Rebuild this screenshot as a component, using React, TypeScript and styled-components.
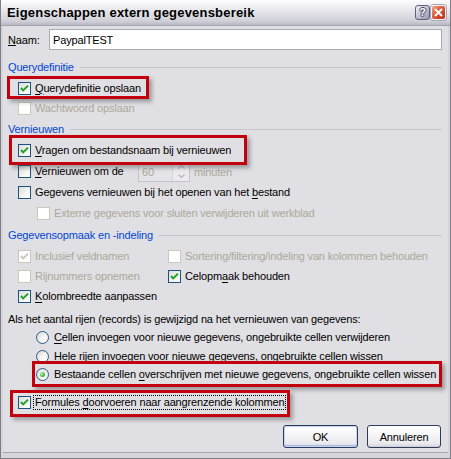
import React from 'react';
import styled, { createGlobalStyle } from 'styled-components';

const Global = createGlobalStyle`
  html, body { margin: 0; padding: 0; background: #e0dfe3; }
  body { font-family: "Liberation Sans", Arial, sans-serif; font-size: 11px; letter-spacing: -0.16px; color: #000; }
  * { box-sizing: border-box; }
`;

const Window = styled.div`
  width: 451px;
  height: 459px;
  display: flex;
  flex-direction: column;
  background: #e0dfe3;
  border: 1px solid #7f7e87;
  border-top: none;
`;

const TitleBar = styled.div`
  height: 26px;
  flex: none;
  display: flex;
  align-items: center;
  padding: 0 4px 0 6px;
  background: linear-gradient(#fdfdfe 0%, #f1f1f4 22%, #e0e0e6 55%, #cfcfd7 85%, #b8b8c3 100%);
  border-bottom: 1px solid #a4a3ae;
`;

const Title = styled.div`
  font-family: "Liberation Sans", Arial, sans-serif;
  font-weight: bold;
  font-size: 13px;
  letter-spacing: 0.2px;
  color: #000;
`;

const TitleButtons = styled.div`
  margin-left: auto;
  display: flex;
  gap: 1px;
`;

const HelpButton = styled.div`
  width: 15px;
  height: 15px;
  border: 1px solid #5f6079;
  border-radius: 3px;
  background: linear-gradient(135deg, #f6f6fa 0%, #c4c5d8 45%, #9597b3 100%);
  color: #fff;
  font-weight: bold;
  font-size: 11px;
  line-height: 13px;
  text-align: center;
  letter-spacing: 0;
  text-shadow: 1px 0 #4a4b63, -1px 0 #4a4b63, 0 1px #4a4b63, 0 -1px #4a4b63;
`;

const CloseButton = styled.div`
  width: 15px;
  height: 15px;
  border: 1px solid #f2f2f4;
  border-radius: 3px;
  background: linear-gradient(135deg, #f0a58c 0%, #dc5b3b 45%, #b8301a 100%);
  display: flex;
  align-items: center;
  justify-content: center;
  box-shadow: 0 0 0 1px #a9a9b5;
`;

const Client = styled.div`
  flex: 1;
  display: flex;
  flex-direction: column;
  padding: 0 6px 0 5px;
  border-left: 2px solid #d6d5dc;
  border-right: 2px solid #d6d5dc;
  border-bottom: 5px solid #d6d5dc;
  box-shadow: inset 0 -1px #a8a7ae;
`;

const NameRow = styled.div`
  display: flex;
  align-items: center;
  height: 21px;
  margin-top: 3px;
  flex: none;
`;

const NameLabel = styled.label`
  width: 41px;
`;

const TextInput = styled.input`
  flex: 1;
  height: 21px;
  border: 1px solid #a5acb2;
  background: #fff;
  padding: 0 3px;
  font: inherit;
  letter-spacing: inherit;
  color: #000;
  outline: none;
`;

const GroupHeader = styled.div<{ $mt: number }>`
  display: flex;
  align-items: center;
  gap: 6px;
  height: 14px;
  flex: none;
  margin-top: ${p => p.$mt}px;
  color: #0046d5;
  white-space: nowrap;
  &::after {
    content: '';
    flex: 1;
    height: 1px;
    background: #c7c3cb;
  }
`;

const Row = styled.div<{ $h: number; $indent: number; $mt?: number }>`
  display: flex;
  align-items: center;
  height: ${p => p.$h}px;
  flex: none;
  padding-left: ${p => p.$indent}px;
  margin-top: ${p => p.$mt ?? 0}px;
  white-space: nowrap;
`;

const OptionGrid = styled.div`
  display: grid;
  grid-template-columns: 150px 1fr;
  grid-auto-rows: 20px;
  align-items: center;
  padding-left: 10px;
  margin-top: 4px;
  flex: none;
  white-space: nowrap;
`;

const Option = styled.span<{ $width?: number }>`
  display: inline-flex;
  align-items: center;
  width: ${p => (p.$width ? `${p.$width}px` : 'auto')};
`;

const Box = styled.span<{ $disabled?: boolean }>`
  width: 13px;
  height: 13px;
  flex: none;
  display: inline-flex;
  align-items: center;
  justify-content: center;
  border: 1px solid ${p => (p.$disabled ? '#cac8bb' : '#1c5180')};
  background: ${p => (p.$disabled ? '#fff' : 'linear-gradient(135deg, #dcdcd7 0%, #f4f4f2 60%, #fff 100%)')};
`;

const Circle = styled.span<{ $checked?: boolean }>`
  width: 13px;
  height: 13px;
  flex: none;
  border-radius: 50%;
  border: 1px solid #2b5b8a;
  background: radial-gradient(circle at 70% 70%, #fff 0%, #f2f2f0 40%, #d6d6d2 100%);
  display: inline-flex;
  align-items: center;
  justify-content: center;
  &::after {
    content: '';
    display: ${p => (p.$checked ? 'block' : 'none')};
    width: 5px;
    height: 5px;
    border-radius: 50%;
    background: radial-gradient(circle at 35% 35%, #c3f2c3 0%, #4ac44a 50%, #1b8f1b 100%);
  }
`;

const Label = styled.span<{ $disabled?: boolean; $gap?: number; $focus?: boolean }>`
  margin-left: ${p => p.$gap ?? 4}px;
  color: ${p => (p.$disabled ? '#aca899' : '#000')};
  outline: ${p => (p.$focus ? '1px dotted #000' : 'none')};
  outline-offset: 0;
  padding: ${p => (p.$focus ? '0 1px' : '0')};
  line-height: 13px;
  u { text-decoration-thickness: 1px; text-underline-offset: 2px; }
`;

/* Annotation frame drawn over a row: $w fixes the right edge of the frame. */
const Highlight = styled.span<{ $t: number; $b: number; $l: number; $w: number }>`
  position: relative;
  display: inline-flex;
  align-items: center;
  align-self: stretch;
  width: ${p => p.$w}px;
  &::after {
    content: '';
    position: absolute;
    top: ${p => -p.$t}px;
    right: 0;
    bottom: ${p => -p.$b}px;
    left: ${p => -p.$l}px;
    border: 3px solid #c3000d;
    box-shadow: 3px 3px 4px rgba(70, 70, 70, 0.45);
    pointer-events: none;
  }
`;

const Spin = styled.div`
  display: flex;
  width: 52px;
  height: 20px;
  border: 1px solid #c4c3cb;
  background: #e4e3e7;
`;

const SpinValue = styled.div`
  flex: 1;
  display: flex;
  align-items: center;
  padding-left: 3px;
  color: #aca899;
`;

const SpinButtons = styled.div`
  width: 17px;
  display: flex;
  flex-direction: column;
  border-left: 1px solid #d4d3da;
  background: #eceaef;
`;

const SpinHalf = styled.div`
  flex: 1;
  display: flex;
  align-items: center;
  justify-content: center;
`;

const Text = styled.div<{ $mt: number }>`
  height: 14px;
  flex: none;
  display: flex;
  align-items: center;
  margin-top: ${p => p.$mt}px;
  white-space: nowrap;
`;

const Muted = styled.span`
  color: #aca899;
  margin-left: 4px;
`;

const ButtonRow = styled.div`
  display: flex;
  justify-content: flex-end;
  gap: 9px;
  margin-top: 12px;
  padding-right: 1px;
  flex: none;
`;

const Button = styled.button<{ $default?: boolean; $w: number }>`
  width: ${p => p.$w}px;
  height: 23px;
  padding: 0;
  font: inherit;
  letter-spacing: inherit;
  color: #000;
  border: 1px solid #2f3b5a;
  border-radius: 3px;
  background: linear-gradient(#ffffff 0%, #f6f6f8 40%, #ebeaef 80%, #d7d6de 100%);
  box-shadow: ${p =>
    p.$default
      ? 'inset 0 0 0 1px #c5d3f0, inset 0 -1px 0 1px #a9bde6'
      : 'inset 0 -1px 0 #d0cfd8'};
`;

const Check = ({ color }: { color: string }) => (
  <svg width="11" height="11" viewBox="0 0 11 11">
    <path d="M2 5 L4.2 7.4 L9 2.6" fill="none" stroke={color} strokeWidth="2" />
  </svg>
);

const Checkbox = ({ checked, disabled }: { checked?: boolean; disabled?: boolean }) => (
  <Box $disabled={disabled}>{checked && <Check color={disabled ? '#cac8bb' : '#21a121'} />}</Box>
);

const Arrow = ({ up }: { up?: boolean }) => (
  <svg width="7" height="4" viewBox="0 0 7 4">
    <path d={up ? 'M0.5 3.5 L3.5 0.5 L6.5 3.5' : 'M0.5 0.5 L3.5 3.5 L6.5 0.5'} fill="none" stroke="#b8b7bf" strokeWidth="1.3" />
  </svg>
);

export default function App() {
  return (
    <>
      <Global />
      <Window>
        <TitleBar>
          <Title>Eigenschappen extern gegevensbereik</Title>
          <TitleButtons>
            <HelpButton>?</HelpButton>
            <CloseButton>
              <svg width="9" height="9" viewBox="0 0 9 9">
                <path d="M1 1 L8 8 M8 1 L1 8" stroke="#fff" strokeWidth="1.8" />
              </svg>
            </CloseButton>
          </TitleButtons>
        </TitleBar>
        <Client>
          <NameRow>
            <NameLabel><u>N</u>aam:</NameLabel>
            <TextInput defaultValue="PaypalTEST" readOnly />
          </NameRow>

          <GroupHeader $mt={10}>Querydefinitie</GroupHeader>
          <Row $h={20} $indent={10} $mt={4}>
            <Highlight $t={2} $b={1} $l={11} $w={131}>
              <Checkbox checked />
              <Label><u>Q</u>uerydefinitie opslaan</Label>
            </Highlight>
          </Row>
          <Row $h={20} $indent={10}>
            <Checkbox disabled />
            <Label $disabled>Wachtwoord opslaan</Label>
          </Row>

          <GroupHeader $mt={4}>Vernieuwen</GroupHeader>
          <Row $h={21} $indent={10} $mt={4}>
            <Highlight $t={5} $b={4} $l={9} $w={229}>
              <Checkbox checked />
              <Label><u>V</u>ragen om bestandsnaam bij vernieuwen</Label>
            </Highlight>
          </Row>
          <Row $h={21} $indent={10}>
            <Option $width={120}>
              <Checkbox />
              <Label><u>V</u>ernieuwen om de</Label>
            </Option>
            <Spin>
              <SpinValue>60</SpinValue>
              <SpinButtons>
                <SpinHalf><Arrow up /></SpinHalf>
                <SpinHalf><Arrow /></SpinHalf>
              </SpinButtons>
            </Spin>
            <Muted>minuten</Muted>
          </Row>
          <Row $h={21} $indent={10}>
            <Checkbox />
            <Label>Gegevens vernieuwen bij het openen van het <u>b</u>estand</Label>
          </Row>
          <Row $h={21} $indent={29}>
            <Checkbox disabled />
            <Label $disabled>Externe gegevens voor sluiten verwijderen uit werkblad</Label>
          </Row>

          <GroupHeader $mt={4}>Gegevensopmaak en -indeling</GroupHeader>
          <OptionGrid>
            <Option>
              <Checkbox checked disabled />
              <Label $disabled>Inclusief veldnamen</Label>
            </Option>
            <Option>
              <Checkbox disabled />
              <Label $disabled>Sortering/filtering/indeling van kolommen behouden</Label>
            </Option>
            <Option>
              <Checkbox disabled />
              <Label $disabled>Rijnummers opnemen</Label>
            </Option>
            <Option>
              <Checkbox checked />
              <Label>Celopm<u>a</u>ak behouden</Label>
            </Option>
            <Option>
              <Checkbox checked />
              <Label><u>K</u>olombreedte aanpassen</Label>
            </Option>
          </OptionGrid>

          <Text $mt={6}>Als het aantal rijen (records) is gewijzigd na het vernieuwen van gegevens:</Text>
          <Row $h={19} $indent={28} $mt={2}>
            <Circle />
            <Label $gap={5}><u>C</u>ellen invoegen voor nieuwe gegevens, ongebruikte cellen verwijderen</Label>
          </Row>
          <Row $h={18} $indent={28}>
            <Circle />
            <Label $gap={5}>Hele rijen invoegen voor nieuwe gegevens, ongebruikte cellen wissen</Label>
          </Row>
          <Row $h={19} $indent={28}>
            <Highlight $t={4} $b={3} $l={4} $w={408}>
              <Circle $checked />
              <Label $gap={5}>Bestaande cellen <u>o</u>verschrijven met nieuwe gegevens, ongebruikte cellen wissen</Label>
            </Highlight>
          </Row>
          <Row $h={21} $indent={10} $mt={8}>
            <Highlight $t={2} $b={4} $l={8} $w={272}>
              <Checkbox checked />
              <Label $gap={3} $focus>Formules <u>d</u>oorvoeren naar aangrenzende kolommen</Label>
            </Highlight>
          </Row>

          <ButtonRow>
            <Button $default $w={75}>OK</Button>
            <Button $w={74}>Annuleren</Button>
          </ButtonRow>
        </Client>
      </Window>
    </>
  );
}
